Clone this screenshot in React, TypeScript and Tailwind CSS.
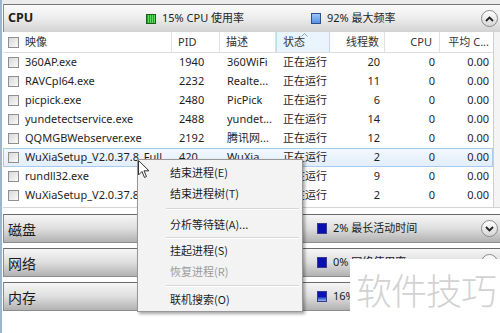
import React from "react";

const rows = [
  { name: "360AP.exe", pid: "1940", desc: "360WiFi", th: "20" },
  { name: "RAVCpl64.exe", pid: "2232", desc: "Realte...", th: "11" },
  { name: "picpick.exe", pid: "2480", desc: "PicPick", th: "6" },
  { name: "yundetectservice.exe", pid: "2488", desc: "yundet...", th: "14" },
  { name: "QQMGBWebserver.exe", pid: "2192", desc: "腾讯网...", th: "12" },
  { name: "WuXiaSetup_V2.0.37.8_Full", pid: "420", desc: "WuXia...", th: "2", sel: true },
  { name: "rundll32.exe", pid: "2724", desc: "Windo...", th: "9" },
  { name: "WuXiaSetup_V2.0.37.8_Full", pid: "3256", desc: "WuXia...", th: "2" },
];

function Check() {
  return (
    <span className="block w-[11px] h-[11px] shrink-0 border border-[#8e8f8f] bg-gradient-to-br from-[#d8d8d8] to-[#fafafa]" />
  );
}

function Circle({ up }: { up?: boolean }) {
  return (
    <span className="w-[17px] h-[17px] mr-[2px] rounded-full border border-[#8a8a8a] bg-gradient-to-b from-white to-[#d6d6d6] flex items-center justify-center shrink-0">
      <svg width="9" height="6" viewBox="0 0 9 6">
        {up ? (
          <path d="M1 5 L4.5 1.5 L8 5" stroke="#222" strokeWidth="1.8" fill="none" />
        ) : (
          <path d="M1 1 L4.5 4.5 L8 1" stroke="#222" strokeWidth="1.8" fill="none" />
        )}
      </svg>
    </span>
  );
}

function BlueIcon({ light }: { light?: boolean }) {
  return (
    <span
      className={
        "block w-[10px] h-[11px] shrink-0 border border-[#3a3a8a] " +
        (light ? "bg-gradient-to-b from-[#0a14b4] via-[#0a14b4] to-[#9fb4f0]" : "bg-[#0a10b0]")
      }
    />
  );
}

function Bar({ title, status, light }: { title: string; status: string; light?: boolean }) {
  return (
    <div className="h-[29px] flex items-center border-t border-b border-l border-t-[#6a6a6a] border-b-[#8c8c8c] border-l-[#8c8c8c] bg-gradient-to-b from-[#f6f6f6] via-[#dedede] to-[#b2b2b2]">
      <span className="w-[313px] pl-[4px] text-[14px] text-[#1a1a1a] font-['Noto_Sans_CJK_SC',sans-serif] leading-none">
        {title}
      </span>
      <BlueIcon light={light} />
      <span className="ml-[6px] text-[11px] text-[#1a1a1a] flex-1 whitespace-nowrap">{status}</span>
      <Circle />
    </div>
  );
}

const cols = "grid grid-cols-[169px_48px_56px_54px_55px_55px_53px]";

export default function App() {
  return (
    <div className="w-[500px] h-[333px] relative overflow-hidden bg-white border-l-2 border-l-[#9fb5cc] font-['Noto_Sans','Noto_Sans_CJK_SC',sans-serif] text-[#1e1e1e]">
      <div className="h-[4px] bg-[#ececec]" />
      <div className="pl-[1px]">
        {/* CPU header */}
        <div className="h-[28px] flex items-center border-t border-l border-t-[#777] border-l-[#8c8c8c] bg-gradient-to-b from-[#fbfbfb] via-[#ececec] to-[#d2d2d2]">
          <span className="w-[142px] pl-[4px] text-[12.5px] font-bold leading-none">CPU</span>
          <span className="block w-[10px] h-[10px] shrink-0 border border-[#1d5e1d] bg-[repeating-linear-gradient(90deg,#1fa81f_0px,#1fa81f_1px,#5fd85f_1px,#5fd85f_2px)]" />
          <span className="w-[155px] pl-[6px] text-[11px] whitespace-nowrap">15% CPU 使用率</span>
          <span className="block w-[10px] h-[11px] shrink-0 border border-[#2f4f8f] bg-gradient-to-b from-[#9cc4f8] to-[#5b92e6]" />
          <span className="ml-[6px] text-[11px] flex-1 whitespace-nowrap">92% 最大频率</span>
          <Circle up />
        </div>

        {/* table */}
        <div className="relative bg-[#f4f4f4] border-b border-[#d4d4d4]">
          <div className="w-[491px] bg-white border-r border-[#cfcfcf]">
            <div className={cols + " h-[21px] items-stretch text-[11px] border-b border-[#dedede] text-[#333]"}>
              <div className="flex items-center pl-[5px] gap-[6px] border-r border-[#e2e2e2]">
                <Check />
                <span>映像</span>
              </div>
              <div className="flex items-center pl-[6px] border-r border-[#e2e2e2]">PID</div>
              <div className="flex items-center pl-[6px] border-r border-[#e2e2e2]">描述</div>
              <div className="relative flex items-center pl-[6px] border-r border-l border-[#bcdcf4] bg-[#e9f4fc]">
                <svg className="absolute left-[24px] top-[1px]" width="7" height="4" viewBox="0 0 7 4">
                  <path d="M0.5 3.5 L3.5 0.5 L6.5 3.5" stroke="#8aa0b8" strokeWidth="1" fill="none" />
                </svg>
                状态
              </div>
              <div className="flex items-center justify-end pr-[5px] border-r border-[#e2e2e2]">线程数</div>
              <div className="flex items-center justify-end pr-[7px] border-r border-[#e2e2e2]">CPU</div>
              <div className="flex items-center justify-end pr-[4px] whitespace-nowrap">平均 C...</div>
            </div>
            {rows.map((r, i) => (
              <div
                key={i}
                className={
                  cols +
                  " h-[19px] items-center text-[11px] whitespace-nowrap " +
                  (r.sel ? "border border-[#a9cbec] bg-gradient-to-b from-[#f3f8fd] to-[#e2eefb]" : "border border-transparent")
                }
              >
                <div className="flex items-center pl-[4px] gap-[6px] overflow-hidden">
                  <Check />
                  <span className="overflow-hidden">{r.name}</span>
                </div>
                <div className="pl-[6px]">{r.pid}</div>
                <div className="pl-[6px] overflow-hidden">{r.desc}</div>
                <div className="pl-[6px]">正在运行</div>
                <div className="text-right pr-[6px]">{r.th}</div>
                <div className="text-right pr-[6px]">0</div>
                <div className="text-right pr-[5px]">0.00</div>
              </div>
            ))}
            <div className="h-[2px]" />
          </div>
        </div>

        <div className="h-[6px]" />
        <Bar title="磁盘" status="2% 最长活动时间" />
        <div className="h-[5px]" />
        <Bar title="网络" status="0% 网络使用率" />
        <div className="h-[5px]" />
        <Bar title="内存" status="16% 已用物理内存" light />
      </div>

      {/* context menu */}
      <div className="absolute left-[135px] top-[159px] w-[166px] border border-[#979797] bg-[#f3f3f3] shadow-[2px_2px_3px_rgba(0,0,0,0.35)] pt-[2px] pb-[1px] text-[11px] font-['Noto_Sans_CJK_SC','Noto_Sans',sans-serif]">
        <div className="h-[21px] flex items-center pl-[32px]">结束进程(E)</div>
        <div className="h-[21px] flex items-center pl-[32px]">结束进程树(T)</div>
        <div className="h-[10px] flex items-center ml-[28px] mr-[3px]">
          <div className="w-full h-[2px] border-t border-[#d7d7d7] border-b border-b-white" />
        </div>
        <div className="h-[21px] flex items-center pl-[32px]">分析等待链(A)...</div>
        <div className="h-[5px] flex items-center ml-[28px] mr-[3px]">
          <div className="w-full h-[2px] border-t border-[#d7d7d7] border-b border-b-white" />
        </div>
        <div className="h-[21px] flex items-center pl-[32px]">挂起进程(S)</div>
        <div className="h-[21px] flex items-center pl-[32px] text-[#9a9a9a]">恢复进程(R)</div>
        <div className="h-[7px] flex items-center ml-[28px] mr-[3px]">
          <div className="w-full h-[2px] border-t border-[#d7d7d7] border-b border-b-white" />
        </div>
        <div className="h-[21px] flex items-center pl-[32px]">联机搜索(O)</div>
      </div>

      {/* cursor */}
      <svg className="absolute left-[136px] top-[160px]" width="12" height="19" viewBox="0 0 12 19">
        <path d="M0.5 0.5 L0.5 15 L4 11.5 L6.5 17.5 L8.5 16.5 L6 10.8 L11 10.8 Z" fill="white" stroke="#333" strokeWidth="1" strokeLinejoin="round" />
      </svg>

      {/* watermark */}
      <div className="absolute left-[348px] top-[259px] w-[152px] h-[74px] bg-white flex justify-center pt-[10px]">
        <span className="text-[36px] leading-[40px] text-[#d2d2d2] font-['Noto_Sans_CJK_SC',sans-serif] font-light tracking-[-1px]">
          软件技巧
        </span>
      </div>
    </div>
  );
}
